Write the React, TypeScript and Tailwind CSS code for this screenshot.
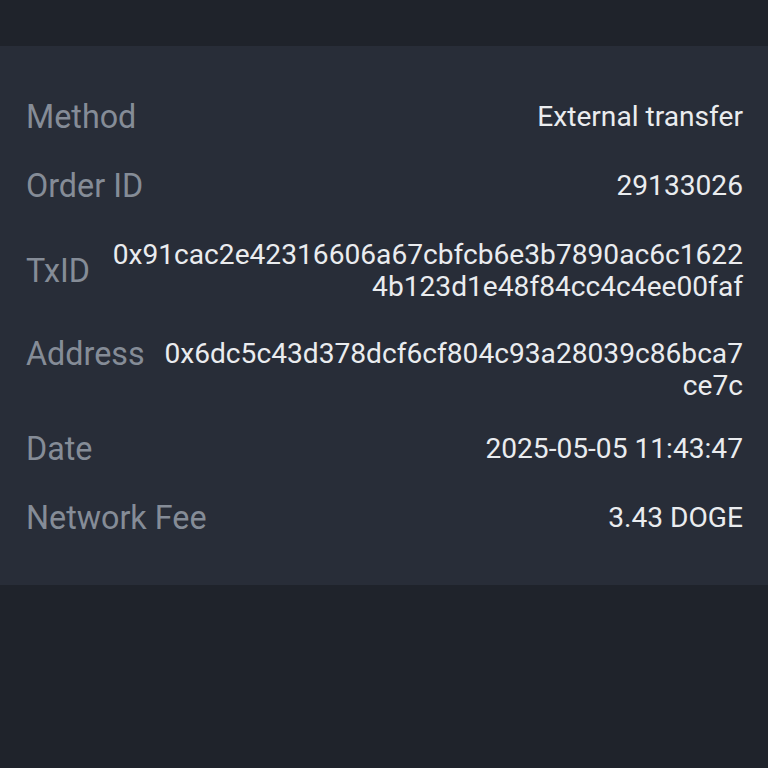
import React from "react"

interface DetailRow {
  label: string
  value: string
  align?: "center" | "start"
  extra?: string
}

const ROWS: DetailRow[] = [
  { label: "Method", value: "External transfer" },
  { label: "Order ID", value: "29133026" },
  { label: "TxID", value: "0x91cac2e42316606a67cbfcb6e3b7890ac6c16224b123d1e48f84cc4c4ee00faf" },
  { label: "Address", value: "0x6dc5c43d378dcf6cf804c93a28039c86bca7ce7c", align: "start", extra: "-mt-[2px]" },
  { label: "Date", value: "2025-05-05 11:43:47", extra: "-mt-[6px]" },
  { label: "Network Fee", value: "3.43 DOGE" },
]

export default function App() {
  return (
    <div
      className="w-full h-[768px] bg-[#1f232b] flex flex-col overflow-hidden"
      style={{ fontFamily: "Roboto, 'Noto Sans', sans-serif" }}
    >
      <div className="h-[46px] shrink-0" />
      <div className="bg-[#282d38] pt-[55px] pb-[51px] pl-[26px] pr-[25px] flex flex-col gap-[37px]">
        {ROWS.map(row => (
          <div
            key={row.label}
            className={`flex justify-between gap-4 ${row.align === "start" ? "items-start" : "items-center"} ${row.extra ?? ""}`}
          >
            <span className="shrink-0 text-[32.3px] leading-[32px] text-[#858c97]">{row.label}</span>
            <span className="flex-1 min-w-0 text-right break-all text-[28.15px] leading-[32px] text-[#eaecef]">
              {row.value}
            </span>
          </div>
        ))}
      </div>
    </div>
  )
}
